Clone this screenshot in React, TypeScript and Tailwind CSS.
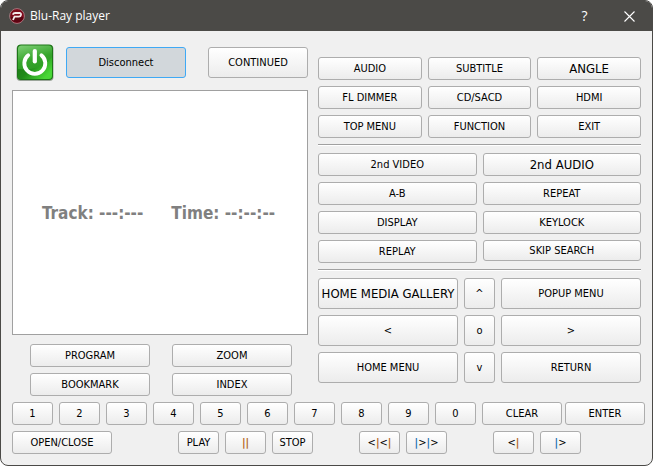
import { useId } from "react";
import type { ReactNode } from "react";

type KeyProps = { children: ReactNode; className?: string; label?: string };

function Key({ children, className = "h-[23px]", label }: KeyProps) {
  return (
    <button
      type="button"
      aria-label={label}
      className={`flex items-center justify-center whitespace-nowrap rounded-[3px] border border-[#adadad] bg-linear-to-b from-white to-[#ececec] text-black hover:border-[#3fa2ec] active:bg-[#d2d7db] ${className}`}
    >
      {children}
    </button>
  );
}

function Separator() {
  return <hr className="mt-[6px] mb-[7px] h-[2px] border-0 border-t border-b border-t-[#a0a0a0] border-b-white" />;
}

function AppLogo() {
  return (
    <svg width="16" height="16" viewBox="0 0 16 16" aria-hidden="true">
      <circle cx="8" cy="8" r="7.4" fill="#7d0a1c" stroke="#a98288" strokeWidth="0.9" />
      <path d="M1.5 9a6.6 6.6 0 0 0 13 0z" fill="#5c0412" />
      <path d="M4 12 5.500 8.600h4.300c2.500 0 3.200-3.600.6-3.600H6.200c-1.200 0-1.900.5-2.500 1.600" fill="none" stroke="#f3e8ea" strokeWidth="1.800" />
    </svg>
  );
}

function PowerIcon() {
  const id = useId();
  return (
    <svg width="38" height="37" viewBox="0 0 38 37" aria-hidden="true">
      <defs>
        <linearGradient id={`${id}-face`} x1="0" y1="0" x2="0.3" y2="1">
          <stop offset="0" stopColor="#7fcf76" />
          <stop offset="0.5" stopColor="#35a52b" />
          <stop offset="1" stopColor="#28951f" />
        </linearGradient>
        <linearGradient id={`${id}-shade`} x1="0" y1="0" x2="1" y2="0.6">
          <stop offset="0" stopColor="#1f7518" />
          <stop offset="0.5" stopColor="#218b19" />
          <stop offset="1" stopColor="#49d737" />
        </linearGradient>
      </defs>
      <rect x="0.5" y="1" width="37" height="36" rx="4" fill="#9ba59a" />
      <rect x="1" y="0.5" width="36" height="35.500" rx="4" fill="#1d7717" />
      <rect x="2" y="1.500" width="34" height="33.500" rx="3.500" fill={`url(#${id}-face)`} />
      <path d="M2 25C14 27 28 23 36 13v18.500a3.500 3.500 0 0 1-3.500 3.500h-27a3.500 3.500 0 0 1-3.500-3.500z" fill={`url(#${id}-shade)`} />
      <path d="M12.200 11.200a10.500 10.500 0 1 0 13.200 0" fill="none" stroke="white" strokeWidth="3.800" strokeLinecap="round" />
      <path d="M18.800 7v10.500" stroke="white" strokeWidth="4.200" strokeLinecap="round" />
    </svg>
  );
}

const discKeys = ["AUDIO", "SUBTITLE", "ANGLE", "FL DIMMER", "CD/SACD", "HDMI", "TOP MENU", "FUNCTION", "EXIT"];
const modeKeys = ["2nd VIDEO", "2nd AUDIO", "A-B", "REPEAT", "DISPLAY", "KEYLOCK", "REPLAY", "SKIP SEARCH"];
const menuKeys = ["HOME MEDIA GALLERY", "^", "POPUP MENU", "<", "o", ">", "HOME MENU", "v", "RETURN"];
const largeKeys = ["ANGLE", "2nd AUDIO", "HOME MEDIA GALLERY"];
const digits = ["1", "2", "3", "4", "5", "6", "7", "8", "9", "0"];

function keyStyle(name: string) {
  if (name === "SKIP SEARCH") return "h-[21px]";
  return largeKeys.includes(name) ? "h-[23px] text-[13px]" : "h-[23px]";
}

function AmberBar() {
  return <span className="font-bold text-[#b5651d]">|</span>;
}

function BlueBar() {
  return <span className="font-bold text-[#1f6fb5]">|</span>;
}

export default function App() {
  return (
    <div className="flex min-h-screen flex-col overflow-hidden rounded-lg border border-[#4b4a47] bg-[#f0f0f0] font-['DejaVu_Sans_Condensed','Noto_Sans',sans-serif] text-[11px] leading-4">
      <header className="flex h-[30px] items-center bg-[#4b4a47] pl-2 font-['Open_Sans','Noto_Sans',sans-serif] text-white">
        <AppLogo />
        <h1 className="ml-[5px] flex-1 text-xs">Blu-Ray player</h1>
        <button type="button" aria-label="Help" className="h-full w-[45px] text-sm">
          ?
        </button>
        <button type="button" aria-label="Close" className="flex h-full w-[45px] items-center justify-center">
          <svg width="11" height="11" viewBox="0 0 11 11" aria-hidden="true">
            <path d="M.5.5l10 10M10.500.5l-10 10" stroke="white" strokeWidth="1.100" />
          </svg>
        </button>
      </header>

      <main className="flex flex-col pl-[11px]">
        <div className="flex gap-[10px] pr-[11px]">
          <section className="flex w-[296px] shrink-0 flex-col pt-[13px]">
            <div className="flex items-center pl-1">
              <button type="button" aria-label="Power">
                <PowerIcon />
              </button>
              <button
                type="button"
                className="ml-3 h-[31px] w-[120px] rounded-[3px] border border-[#3fa9f5] bg-[#d2d7db] text-black"
              >
                Disconnect
              </button>
              <Key className="ml-auto h-[31px] w-[100px]">CONTINUED</Key>
            </div>
            <output className="mt-[9px] flex h-[245px] items-center gap-7 border border-[#a0a0a0] bg-white pl-[29px] text-[17px] font-bold text-[#808080]">
              <span>Track: ---:---</span>
              <span>Time: --:--:--</span>
            </output>
            <div className="mt-[9px] grid grid-cols-2 gap-x-[22px] gap-y-[6px] pr-4 pl-[18px]">
              {["PROGRAM", "ZOOM", "BOOKMARK", "INDEX"].map((name) => (
                <Key key={name}>{name}</Key>
              ))}
            </div>
          </section>

          <section className="flex min-w-0 flex-1 flex-col pt-[26px]">
            <div className="grid grid-cols-3 gap-[6px]">
              {discKeys.map((name) => (
                <Key key={name} className={keyStyle(name)}>
                  {name}
                </Key>
              ))}
            </div>
            <Separator />
            <div className="grid grid-cols-2 gap-[6px]">
              {modeKeys.map((name) => (
                <Key key={name} className={keyStyle(name)}>
                  {name}
                </Key>
              ))}
            </div>
            <Separator />
            <div className="grid grid-cols-[1fr_31px_1fr] gap-[6px]">
              {menuKeys.map((name) => (
                <Key key={name} className={largeKeys.includes(name) ? "h-[31px] text-[13px]" : "h-[31px]"}>
                  {name}
                </Key>
              ))}
            </div>
          </section>
        </div>

        <div className="mt-[6px] flex gap-[6px] pr-[7px]">
          {digits.map((digit) => (
            <Key key={digit} className="h-[23px] w-[41px]">
              {digit}
            </Key>
          ))}
          <div className="flex flex-1 gap-[3px]">
            <Key className="h-[23px] flex-1">CLEAR</Key>
            <Key className="h-[23px] flex-1">ENTER</Key>
          </div>
        </div>

        <div className="mt-[6px] flex">
          <Key className="h-[23px] w-[100px]">OPEN/CLOSE</Key>
          <div className="ml-[66px] flex gap-[6px]">
            <Key className="h-[23px] w-[41px]">PLAY</Key>
            <Key label="Pause" className="h-[23px] w-[41px]">
              <AmberBar />
              <AmberBar />
            </Key>
            <Key className="h-[23px] w-[41px]">STOP</Key>
          </div>
          <div className="ml-[46px] flex gap-[6px]">
            <Key label="Previous" className="h-[23px] w-[41px]">
              {"<"}
              <AmberBar />
              {"<"}
              <AmberBar />
            </Key>
            <Key label="Next" className="h-[23px] w-[41px]">
              <BlueBar />
              {">"}
              <BlueBar />
              {">"}
            </Key>
          </div>
          <div className="ml-[46px] flex gap-[6px]">
            <Key label="Step back" className="h-[23px] w-[41px]">
              {"<"}
              <AmberBar />
            </Key>
            <Key label="Step forward" className="h-[23px] w-[41px]">
              <BlueBar />
              {">"}
            </Key>
          </div>
        </div>
      </main>
    </div>
  );
}
